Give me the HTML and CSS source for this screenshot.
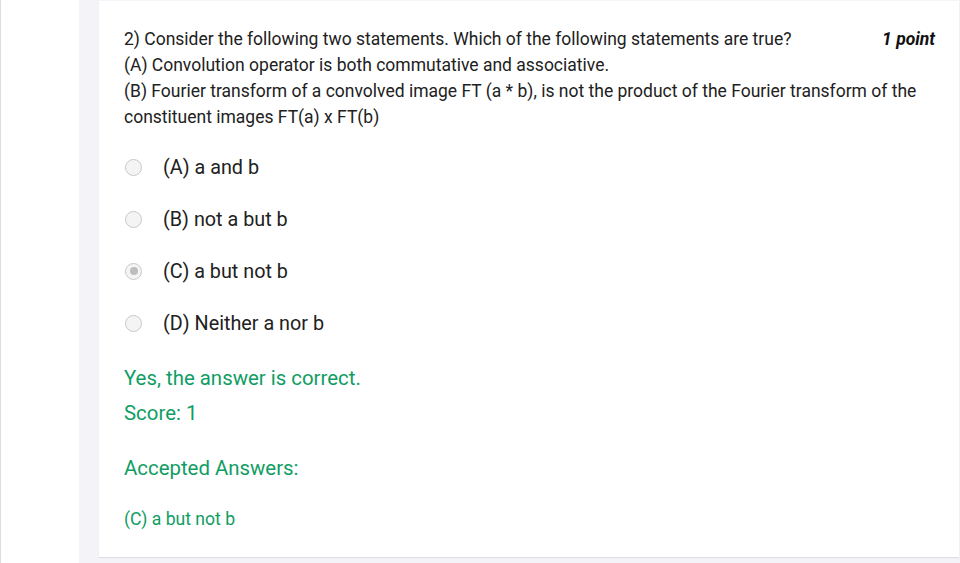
FILE: index.html
```html
<!DOCTYPE html>
<html>
<head>
<meta charset="utf-8">
<link rel="stylesheet" href="styles.css">
</head>
<body>
<div class="page">
  <div class="side"></div>
  <div class="gutter">
    <div class="card">
      <div class="qhead">
        <div class="points">1 point</div>
        <div>2) Consider the following two statements. Which of the following statements are true?</div>
        <div>(A) Convolution operator is both commutative and associative.</div>
        <div>(B) Fourier transform of a convolved image FT (a * b), is not the product of the Fourier transform of the constituent images FT(a) x FT(b)</div>
      </div>
      <div class="options">
        <div class="opt"><span class="radio"></span><span>(A) a and b</span></div>
        <div class="opt"><span class="radio"></span><span>(B) not a but b</span></div>
        <div class="opt"><span class="radio checked"></span><span>(C) a but not b</span></div>
        <div class="opt"><span class="radio"></span><span>(D) Neither a nor b</span></div>
      </div>
      <div class="result">Yes, the answer is correct.</div>
      <div class="score">Score: 1</div>
      <div class="accepted">Accepted Answers:</div>
      <div class="answer">(C) a but not b</div>
    </div>
  </div>
</div>
</body>
</html>
```

FILE: styles.css
```css
html, body {
  margin: 0;
  padding: 0;
  background: #fff;
  font-family: Roboto, "Liberation Sans", sans-serif;
  color: #212121;
}
.page {
  display: flex;
  height: 563px;
  overflow: hidden;
}
.side {
  width: 78px;
  border-left: 1px solid #dedede;
  background: #fff;
}
.gutter {
  flex: 1;
  background: #f4f4f8;
  padding: 1px 1px 6px 20px;
  display: flex;
}
.card {
  flex: 1;
  background: #fff;
  box-shadow: 0 1px 1px rgba(0,0,0,0.08);
  padding: 25px 24px 0 25px;
}
.qhead {
  font-size: 17.5px;
  line-height: 26px;
}
.points {
  float: right;
  font-weight: bold;
  font-style: italic;
  white-space: nowrap;
  padding-left: 20px;
  color: #111;
}
.options {
  margin-top: 11px;
  display: flex;
  flex-direction: column;
}
.opt {
  display: flex;
  align-items: center;
  height: 52px;
  font-size: 19.8px;
}
.radio {
  width: 17px;
  height: 17px;
  border-radius: 50%;
  border: 1px solid #c8c8c8;
  background: #f4f4f4;
  box-sizing: border-box;
  margin-left: 1px;
  margin-right: 21px;
  position: relative;
}
.radio.checked::after {
  content: "";
  position: absolute;
  left: 3.5px;
  top: 3.5px;
  width: 8px;
  height: 8px;
  border-radius: 50%;
  background: #bdbdbd;
}
.result, .score, .accepted, .answer {
  color: #0f9d63;
}
.result {
  margin-top: 15px;
  font-size: 20.4px;
  line-height: 28px;
}
.score {
  margin-top: 7px;
  font-size: 20.4px;
  line-height: 28px;
}
.accepted {
  margin-top: 27px;
  font-size: 20.4px;
  line-height: 28px;
}
.answer {
  margin-top: 25px;
  font-size: 17.6px;
  line-height: 24px;
}
```
